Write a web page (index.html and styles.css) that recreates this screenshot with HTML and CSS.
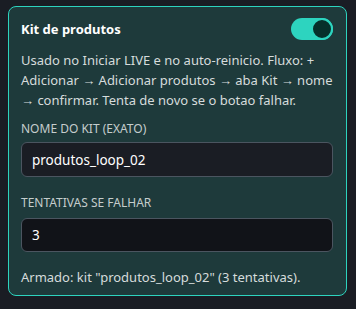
FILE: index.html
```html
<!DOCTYPE html>
<html lang="pt">
<head>
    <meta charset="UTF-8">
    <meta name="viewport" content="width=device-width, initial-scale=1.0">
    <title>Kit de produtos</title>
    <link rel="stylesheet" href="styles.css">
</head>
<body>
    <div class="panel">
        <div class="panel-head">
            <div class="panel-title">Kit de produtos</div>
            <div class="toggle on">
                <div class="toggle-knob"></div>
            </div>
        </div>
        <p class="panel-help">
            Usado no Iniciar LIVE e no auto-reinicio. Fluxo: + Adicionar &rarr; Adicionar produtos &rarr; aba Kit &rarr; nome &rarr; confirmar. Tenta de novo se o botao falhar.
        </p>
        <label class="field-label first">NOME DO KIT (EXATO)</label>
        <input class="field-input first" type="text" value="produtos_loop_02">
        <label class="field-label">TENTATIVAS SE FALHAR</label>
        <input class="field-input dark" type="text" value="3">
        <div class="panel-status">Armado: kit "produtos_loop_02" (3 tentativas).</div>
    </div>
</body>
</html>
```

FILE: styles.css
```css
body{
    margin: 0;
    background-color: #1a1d24;
    font-family: "Noto Sans", sans-serif;
    padding: 6px 9px 0 8px;
}
.panel{
    width: 312px;
    height: 288px;
    box-sizing: content-box;
    border: 1px solid #2dd4bf;
    border-radius: 8px;
    background-color: #1e3a3b;
    padding: 0 13px 0 12px;
    display: flex;
    flex-direction: column;
}
.panel-head{
    display: flex;
    justify-content: space-between;
    align-items: center;
    margin-top: 10px;
    height: 24px;
}
.panel-title{
    color: #fff;
    font-weight: bold;
    font-size: 13px;
}
.toggle{
    width: 42px;
    height: 22px;
    border-radius: 11px;
    background-color: #2dd4bf;
    display: flex;
    justify-content: flex-end;
    align-items: center;
}
.toggle-knob{
    width: 18px;
    height: 18px;
    border-radius: 50%;
    background-color: #06302b;
    border: 2px solid #2dd4bf;
}
.panel-help{
    color: #d6dcdc;
    font-size: 13px;
    line-height: 20px;
    margin: 9px 0 0 0;
}
.field-label{
    color: #c5cdcd;
    font-size: 12px;
    line-height: 16px;
    margin-top: 18px;
}
.field-label.first{
    margin-top: 11px;
}
.field-input{
    margin-top: 7px;
    height: 35px;
    box-sizing: border-box;
    background-color: #1a1d24;
    border: 1px solid #4b5560;
    border-radius: 6px;
    color: #fff;
    font-family: "Noto Sans", sans-serif;
    font-size: 13.5px;
    padding: 0 10px;
}
.field-input.first{
    margin-top: 5px;
}
.field-input.dark{
    background-color: #111318;
    height: 34px;
}
.panel-status{
    color: #d6dcdc;
    font-size: 13px;
    line-height: 18px;
    margin-top: 16px;
}
```
